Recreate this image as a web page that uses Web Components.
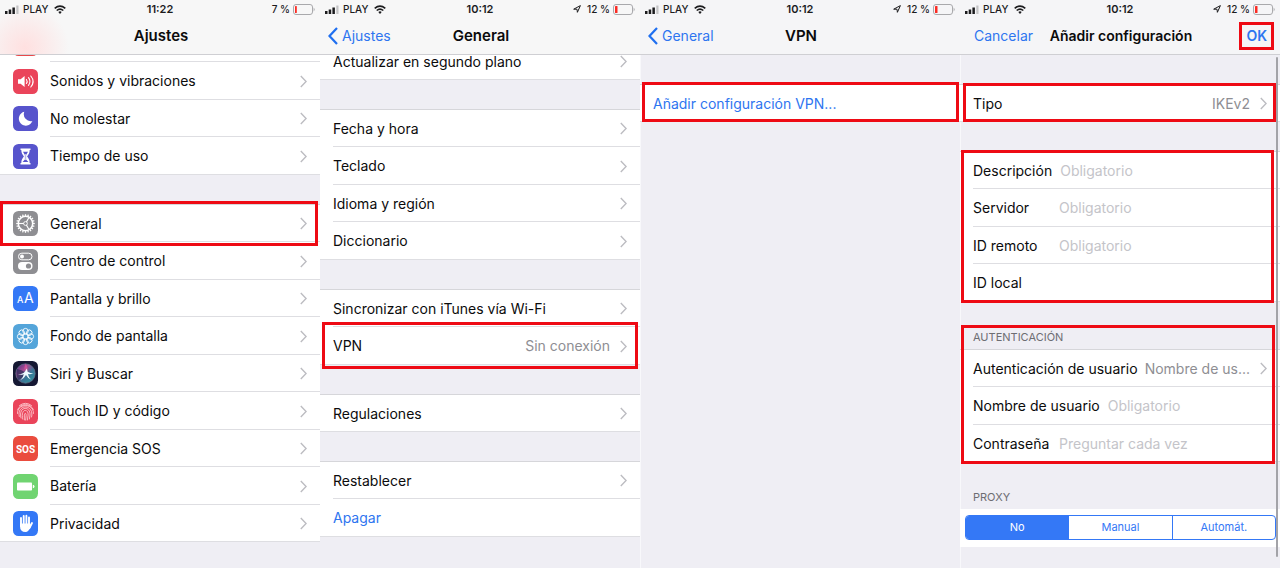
<!DOCTYPE html>
<html lang="es">
<head>
<meta charset="utf-8">
<meta name="viewport" content="width=device-width, initial-scale=1">
<title>Configurar VPN</title>
<style>
  body {
    margin: 0;
    min-height: 100vh;
    display: grid;
    grid-template-columns: repeat(4, minmax(0, 1fr));
    font-family: Inter, "Liberation Sans", sans-serif;
    font-size: 14px;
    line-height: 18px;
    color: #0b0b0c;
    background: #efeef4;
  }
</style>
</head>
<body>

<ios-screen heading="Ajustes" time="11:22" battery="7 %" level="7" tint style="--scrolled: -31px">
  <ios-group>
    <ios-row icon="alert" label=""></ios-row>
    <ios-row icon="sound" label="Sonidos y vibraciones"></ios-row>
    <ios-row icon="moon" label="No molestar"></ios-row>
    <ios-row icon="hourglass" label="Tiempo de uso"></ios-row>
  </ios-group>
  <ios-group>
    <ios-row icon="gear" label="General"><mark-box style="inset: -4px 2px -4px 0"></mark-box></ios-row>
    <ios-row icon="toggles" label="Centro de control"></ios-row>
    <ios-row icon="letters" label="Pantalla y brillo"></ios-row>
    <ios-row icon="flower" label="Fondo de pantalla"></ios-row>
    <ios-row icon="siri" label="Siri y Buscar"></ios-row>
    <ios-row icon="finger" label="Touch ID y código"></ios-row>
    <ios-row icon="sos" label="Emergencia SOS"></ios-row>
    <ios-row icon="battery" label="Batería"></ios-row>
    <ios-row icon="hand" label="Privacidad"></ios-row>
  </ios-group>
</ios-screen>

<ios-screen heading="General" back="Ajustes" time="10:12" battery="12 %" level="12" located style="--scrolled: -13px">
  <ios-group>
    <ios-row label="Actualizar en segundo plano"></ios-row>
  </ios-group>
  <ios-group>
    <ios-row label="Fecha y hora"></ios-row>
    <ios-row label="Teclado"></ios-row>
    <ios-row label="Idioma y región"></ios-row>
    <ios-row label="Diccionario"></ios-row>
  </ios-group>
  <ios-group>
    <ios-row label="Sincronizar con iTunes vía Wi-Fi"></ios-row>
    <ios-row label="VPN" value="Sin conexión"><mark-box style="inset: -5px 2px -4px 2px"></mark-box></ios-row>
  </ios-group>
  <ios-group>
    <ios-row label="Regulaciones"></ios-row>
  </ios-group>
  <ios-group>
    <ios-row label="Restablecer"></ios-row>
    <ios-row label="Apagar" action></ios-row>
  </ios-group>
</ios-screen>

<ios-screen heading="VPN" back="General" time="10:12" battery="12 %" level="12" located edge style="--scrolled: 29px">
  <ios-group>
    <ios-row label="Añadir configuración VPN..." action><mark-box style="inset: -3px 1px 0 2px"></mark-box></ios-row>
  </ios-group>
</ios-screen>

<ios-screen heading="Añadir configuración" cancel="Cancelar" confirm="OK" time="10:12" battery="12 %" level="12" located edge scrollbar style="--scrolled: 29px">
  <ios-group>
    <ios-row label="Tipo" value="IKEv2"><mark-box style="inset: -2px 4px 0 3px"></mark-box></ios-row>
  </ios-group>
  <ios-group>
    <ios-field label="Descripción" hint="Obligatorio"></ios-field>
    <ios-field label="Servidor" hint="Obligatorio"></ios-field>
    <ios-field label="ID remoto" hint="Obligatorio"></ios-field>
    <ios-field label="ID local"></ios-field>
    <mark-box style="inset: -1px 6px -1px 1px"></mark-box>
  </ios-group>
  <ios-group heading="AUTENTICACIÓN">
    <ios-row label="Autenticación de usuario" value="Nombre de us..."></ios-row>
    <ios-field label="Nombre de usuario" hint="Obligatorio"></ios-field>
    <ios-field label="Contraseña" hint="Preguntar cada vez" type="password"></ios-field>
    <mark-box style="inset: -6px 5px -2px 1px"></mark-box>
  </ios-group>
  <ios-group heading="PROXY" plain>
    <ios-segments name="proxy" options="No,Manual,Automát."></ios-segments>
  </ios-group>
</ios-screen>

<script>
const RED = '#ee0a14';

function define(name, render) {
  customElements.define(name, class extends HTMLElement {
    constructor() {
      super();
      const t = document.createElement('template');
      t.innerHTML = render(n => this.getAttribute(n) || '', n => this.hasAttribute(n));
      this.attachShadow({ mode: 'open' }).append(t.content.cloneNode(true));
    }
  });
}

const around = (n, fn) => Array.from({ length: n }, (_, i) => fn(i * 360 / n)).join('');

const ICONS = {
  alert: ['#e8484a', ''],
  sound: ['#ea445a', `<path d="M5 10.3h2.6L11.6 7v11l-4-3.300H5z" fill="#fff"/>
    <g fill="none" stroke="#fff" stroke-width="1.100" stroke-linecap="round"><path d="M13.400 10.500q1.500 2 0 4M15.500 8.700q3 3.800 0 7.600M17.800 7q4.600 5.500 0 11"/></g>`],
  moon: ['#5754cc', `<path d="M11.300 5.800a7 7 0 1 0 8.100 9.300 7 7 0 0 1-8.100-9.300z" fill="#fff"/>`],
  hourglass: ['#5754cc', `<path d="M7.500 4.500h10v1.600h-.8c0 3-1.300 4.700-2.600 6.400 1.300 1.700 2.600 3.400 2.600 6.400h.8v1.600h-10v-1.600h.8c0-3 1.300-4.700 2.600-6.400-1.300-1.700-2.600-3.400-2.600-6.400h-.8z" fill="#fff"/>
    <path d="M10 7.700h5l-1.900 3.300v4.500l2.300 2.500h-5.800l2.300-2.500V11z" fill="#5754cc"/><path d="M12.500 10v6" stroke="#fff" stroke-width=".6"/>`],
  gear: ['#8e8e92', `<g fill="none" stroke="#fff"><circle cx="12.500" cy="12.500" r="7.200" stroke-width="1.500"/>
    ${around(20, a => `<path d="M12.500 3.200v2" stroke-width="1.300" transform="rotate(${a} 12.500 12.500)"/>`)}
    <circle cx="12.500" cy="12.500" r="1.900" stroke-width=".9"/>
    ${around(3, a => `<path d="M14.300 12.500H19" stroke-width="1.100" transform="rotate(${a + 60} 12.500 12.500)"/>`)}</g>`],
  toggles: ['#8e8e92', `<rect x="5.500" y="4.200" width="13.500" height="6.600" rx="3.300" fill="none" stroke="#fff" stroke-width="1"/><circle cx="9" cy="7.500" r="2" fill="#fff"/>
    <rect x="5" y="13" width="14.500" height="8" rx="4" fill="#fff"/><circle cx="15.500" cy="17" r="2.600" fill="#8e8e92"/>`],
  letters: ['#3478f6', `<text x="4" y="17" font-size="9" font-weight="500" fill="#fff">A</text><text x="11" y="17" font-size="14" fill="#fff">A</text>`],
  flower: ['#54a5da', `<g fill="none" stroke="#fff" stroke-width=".9">${around(8, a => `<ellipse cx="12.500" cy="7.200" rx="2.700" ry="2.800" transform="rotate(${a} 12.500 12.500)"/>`)}<circle cx="12.500" cy="12.500" r="2.600"/></g>`],
  siri: ['#151833', `<defs><linearGradient id="s" x1="0" y1="0" x2="1" y2="1"><stop offset="0" stop-color="#4a2f86"/><stop offset=".35" stop-color="#a64b91"/><stop offset=".6" stop-color="#3c7596"/><stop offset="1" stop-color="#2c9ba0"/></linearGradient></defs>
    <circle cx="12.500" cy="12.500" r="9.700" fill="url(#s)" stroke="#68758c" stroke-width=".7"/>
    <path d="M4 8q6 1 8.500 4-1 5-7 7-3-4-1.500-11z" fill="#14264d" opacity=".6"/>
    <path d="M12.500 2.800q4 5 .8 9.500Q10 9 12.500 2.800z" fill="#d9589b" opacity=".8"/>
    <path d="M5 13.500q5-.3 7-3l1.800-3 .8 3.300q3 1.800 5.900 1.700-3.500 1-5.500.5.300 3 3 5.500-3.600-1.700-5-4.500-2 3.500-5.500 5 3-3 3.300-5.700-3 .9-5.800.2z" fill="#eefcff"/>`],
  finger: ['#ea445a', `<g fill="none" stroke="#ffd5da" stroke-width=".8" stroke-linecap="round">
    <path d="M6.500 6.500q6-4.600 12 0M4.700 10.500c2.500-6.600 13-6.600 15.600 0M4.500 14.500c-.8-10.500 16.500-11 16 0M6.300 17.500c-2.800-12 13-13 12.600-1.500l-.4 2M8 19c-3.200-12 9.600-12.500 9-3l-.6 4M9.800 20.200c-2.800-11 6-11 5.300-4l-.7 4.800M11.700 21c-1.500-8 1.600-8 1.400-4.300l-.4 4.300"/></g>`],
  sos: ['#ea4c3e', `<text x="12.500" y="16.500" font-size="10" font-weight="700" font-family="Roboto, sans-serif" fill="#fff" text-anchor="middle">SOS</text>`],
  battery: ['#70d471', `<rect x="4" y="8.500" width="15" height="8" rx=".8" fill="#fff"/><path d="M19.800 10.800q1.700 0 1.700 1.700t-1.700 1.700z" fill="#fff"/>`],
  hand: ['#3478f6', `<g fill="none" stroke="#fff" stroke-linecap="round" stroke-width="1.900"><path d="M8 7v8M10.700 5v9M13.400 4.800v9M16 6.500v9"/><path d="M19 12l-2.600 5"/></g>
    <path d="M7 12.500h10l1 2.500q-2.300 6-5.500 6-5.500 0-5.500-6z" fill="#fff"/>`]
};

const chevron = `<svg class="chev" width="7" height="13" viewBox="0 0 7 13" aria-hidden="true"><path d="M.8 1l5.300 5.500L.8 12" fill="none" stroke="#bcbcc1" stroke-width="1.400"/></svg>`;

/* Red frame that points out a control. */
define('mark-box', () => `
  <style>:host { position: absolute; z-index: 2; box-sizing: border-box; border: 3px solid ${RED}; pointer-events: none; }</style>`);

define('ios-icon', attr => {
  const [color, art] = ICONS[attr('name')];
  return `
  <style>
    :host { display: block; flex: none; width: 25px; height: 25px; }
    svg { display: block; font-family: Inter, sans-serif; }
  </style>
  <svg width="25" height="25" viewBox="0 0 25 25" aria-hidden="true"><rect width="25" height="25" rx="5.500" fill="${color}"/>${art}</svg>`;
});

define('status-bar', (attr, has) => `
  <style>
    :host { display: grid; grid-template-columns: 1fr auto 1fr; align-items: center; height: 18px; padding: 0 5px; font-size: 10px; line-height: 18px; font-weight: 500; color: #1c1c1e; }
    div { display: flex; align-items: center; gap: 4px; }
    .right { justify-content: flex-end; gap: 3px; }
    time { font-size: 11px; font-weight: 600; }
    svg { display: block; flex: none; }
    .arrow { margin-right: 3px; }
    .wifi { margin-left: 2px; }
  </style>
  <div>
    <svg width="14" height="9" viewBox="0 0 14 9" aria-hidden="true"><path d="M0 6h2.500v3H0zM3.700 4.500h2.500V9H3.700zM7.400 2.500h2.500V9H7.400z" fill="#1c1c1e"/><path d="M11.300.5h2.200V9h-2.200z" fill="#c3c3c5"/></svg>
    <span>PLAY</span>
    <svg class="wifi" width="12" height="9" viewBox="0 0 12 9" aria-hidden="true"><path d="M.7 3.300q5.300-4.500 10.600 0M2.700 5.500q3.300-2.800 6.600 0" fill="none" stroke="#1c1c1e" stroke-width="1.600"/><path d="M4.300 7q1.700-1.300 3.400 0L6 8.900z" fill="#1c1c1e"/></svg>
  </div>
  <time>${attr('time')}</time>
  <div class="right">
    ${has('located') ? '<svg class="arrow" width="8" height="8" viewBox="0 0 8 8" aria-hidden="true"><path d="M.7 4.200L7.400.6 4.400 7.300 4 4.200z" fill="none" stroke="#1c1c1e" stroke-width="1"/></svg>' : ''}
    <span>${attr('battery')}</span>
    <svg width="22" height="11" viewBox="0 0 22 11" aria-hidden="true"><rect x=".5" y=".5" width="19" height="10" rx="2.500" fill="none" stroke="#a9a9ac"/><path d="M20.600 3.500q2 2 0 4z" fill="#a9a9ac"/><rect x="2" y="2" width="${attr('level') > 10 ? 2.5 : 1.8}" height="7" rx=".6" fill="#fb2b23"/></svg>
  </div>`);

define('ios-screen', (attr, has) => `
  <style>
    :host { display: flex; flex-direction: column; position: relative; min-width: 0; overflow: hidden; background: #efeef4; }
    header { position: relative; z-index: 3; border-bottom: 1px solid #cfcfd3; background: #f7f7f7; }
    :host([tint]) header { background: radial-gradient(circle at 25px 48px, #ffe0e0 0, #fbeaea 20px, #f7f7f700 44px), #f7f7f7; }
    :host([edge]) header { background: #f5f5f7; }
    nav { display: grid; grid-template-columns: 1fr auto 1fr; align-items: center; height: 36px; padding: 0 6px 0 8px; }
    h1 { margin: 0; font-size: 15px; line-height: 18px; font-weight: 600; color: #0b0b0c; }
    :host([cancel]) h1 { font-size: 14px; }
    a { display: flex; align-items: center; gap: 4px; color: #2e75f0; text-decoration: none; }
    .end { justify-self: end; position: relative; padding: 5px 7px; }
    .plain { font: inherit; border: 0; padding: 0; margin: 0; background: none; color: #2e75f0; text-align: left; }
    .cancel { padding-left: 6px; }
    .ok { font-weight: 600; display: block; }
    mark-box { inset: 0; }
    main { margin-top: var(--scrolled, 0); display: flex; flex-direction: column; gap: 29px; }
    :host([edge]) { background: linear-gradient(90deg, #f8f8fb 1px, #efeef4 1px); }
    .thumb { position: absolute; z-index: 1; top: 57px; right: 2px; bottom: 11px; width: 2px; border-radius: 1px; background: #a3a3a8; }
  </style>
  <header>
    <status-bar time="${attr('time')}" battery="${attr('battery')}" level="${attr('level')}" ${has('located') ? 'located' : ''}></status-bar>
    <nav>
      <span>${has('back') ? `<a href="#"><svg width="10" height="18" viewBox="0 0 10 18" aria-hidden="true"><path d="M9 1L1.500 9 9 17" fill="none" stroke="#1f6ff0" stroke-width="2.200"/></svg>${attr('back')}</a>` : ''}${has('cancel') ? `<button class="plain cancel">${attr('cancel')}</button>` : ''}</span>
      <h1>${attr('heading')}</h1>
      ${has('confirm') ? `<span class="end"><button class="plain ok">${attr('confirm')}</button><mark-box></mark-box></span>` : '<span></span>'}
    </nav>
  </header>
  <main><slot></slot></main>
  ${has('scrollbar') ? '<div class="thumb"></div>' : ''}`);

define('ios-group', (attr, has) => `
  <style>
    :host { display: block; position: relative; }
    h2 { margin: 0; padding: 0 13px 5px; font-size: 11px; line-height: 13px; font-weight: 400; color: #6d6d72; }
    .rows { border-top: 1px solid #d6d6da; background: #fff; }
    :host([plain]) .rows { border-top-color: #fff; }
    ::slotted(:nth-child(even)) { --row: 38px; }
  </style>
  ${has('heading') ? `<h2>${attr('heading')}</h2>` : ''}
  <div class="rows"><slot></slot></div>`);

define('ios-row', (attr, has) => `
  <style>
    :host { display: block; position: relative; }
    a { display: flex; align-items: center; box-sizing: border-box; height: var(--row, 37px); padding: 0 13px; color: inherit; text-decoration: none; white-space: nowrap;
        background: linear-gradient(#dedee2, #dedee2) right bottom / calc(100% - ${has('icon') ? 50 : 13}px) 1px no-repeat; }
    :host(:last-child) a { background-size: 100% 1px; }
    ios-icon { margin-right: 12px; }
    .label { flex: 1; }
    .value { color: #8e8e93; margin-right: 10px; }
    .action { color: #2e75f0; }
    .chev { flex: none; }
  </style>
  <a href="#">${has('icon') ? `<ios-icon name="${attr('icon')}"></ios-icon>` : ''}<span class="label ${has('action') ? 'action' : ''}">${attr('label')}</span>${has('value') ? `<span class="value">${attr('value')}</span>` : ''}${has('action') ? '' : chevron}</a>
  <slot></slot>`);

define('ios-field', attr => `
  <style>
    :host { display: block; }
    div { display: flex; align-items: center; gap: 8px; box-sizing: border-box; height: var(--row, 37px); padding: 0 13px;
        background: linear-gradient(#dedee2, #dedee2) right bottom / calc(100% - 13px) 1px no-repeat; }
    label { flex: none; min-width: 78px; }
    input { flex: 1; min-width: 0; margin: 0; padding: 0; border: 0; outline: 0; background: none; font: inherit; color: inherit; }
    input::placeholder { color: #c4c4c9; opacity: 1; }
  </style>
  <div><label for="f">${attr('label')}</label><input id="f" type="${attr('type') || 'text'}" placeholder="${attr('hint')}"></div>`);

define('ios-segments', attr => `
  <style>
    :host { display: block; padding: 5px 4px 7px 5px; }
    div { display: flex; border: 1px solid #3478f6; border-radius: 4px; overflow: hidden; }
    label { flex: 1; position: relative; text-align: center; font-size: 11px; line-height: 23px; color: #3478f6; }
    label + label { border-left: 1px solid #3478f6; }
    input { position: absolute; inset: 0; margin: 0; opacity: 0; }
    label:has(:checked) { background: #3478f6; color: #fff; }
  </style>
  <div role="radiogroup" aria-label="Proxy">${attr('options').split(',').map((o, i) => `<label><input type="radio" name="${attr('name')}" ${i ? '' : 'checked'}>${o}</label>`).join('')}</div>`);
</script>
</body>
</html>
